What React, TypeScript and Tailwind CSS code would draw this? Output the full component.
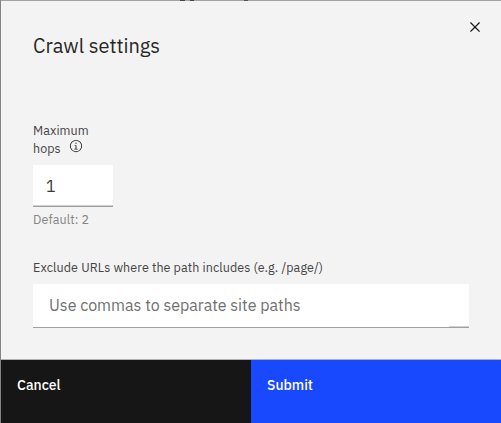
import React from "react";

function CloseIcon() {
  return (
    <svg width="20" height="20" viewBox="0 0 32 32" fill="#161616" aria-hidden="true">
      <path d="M24 9.4 22.6 8 16 14.6 9.4 8 8 9.4 14.6 16 8 22.6 9.4 24 16 17.4 22.6 24 24 22.6 17.4 16z" />
    </svg>
  );
}

function InfoIcon() {
  return (
    <svg width="14" height="14" viewBox="0 0 32 32" fill="#262626" aria-hidden="true">
      <path d="M17 22v-8h-4v2h2v6h-3v2h8v-2zM16 8a1.5 1.5 0 1 0 1.5 1.5A1.5 1.5 0 0 0 16 8z" />
      <path d="M16 30a14 14 0 1 1 14-14 14 14 0 0 1-14 14zm0-26a12 12 0 1 0 12 12A12 12 0 0 0 16 4z" />
    </svg>
  );
}

export default function App() {
  return (
    <div className="flex h-[423px] w-[501px] flex-col overflow-hidden border-l border-[#858585] bg-[#f3f3f3] font-['IBM_Plex_Sans',Roboto,sans-serif] text-[#262626]">
      <div className="flex h-px shrink-0 bg-[#a3a3a3] pl-[179px]">
        <span className="h-px w-[5px] bg-[#444]" />
        <span className="ml-[5px] h-px w-[4px] bg-[#444]" />
        <span className="ml-[50px] h-px w-[4px] bg-[#555]" />
      </div>
      <header className="flex h-[120px] shrink-0 justify-between pl-8 pr-4">
        <h1 className="pt-[31px] text-[20px] leading-7">Crawl settings</h1>
        <button aria-label="Close" className="mt-4 h-5 w-5">
          <CloseIcon />
        </button>
      </header>
      <main className="flex h-[238px] shrink-0 flex-col pl-8 pr-8">
        <label className="block h-11 w-20 text-[12.5px] leading-[18px] tracking-[0.08px] text-[#444444]">
          Maximum
          <span className="flex">
            hops
            <span className="ml-2 h-4">
              <InfoIcon />
            </span>
          </span>
        </label>
        <input
          defaultValue="1"
          className="h-[42px] w-20 rounded-none border-b border-[#a0a0a0] bg-white pl-[13px] pr-3 text-[16px] text-[#393939] shadow-[inset_0_-1px_0_#d0d0d0] outline-none"
        />
        <p className="mt-[3px] text-[12.5px] leading-[18px] tracking-[0.12px] text-[#858585]">Default: 2</p>
        <label className="mt-[30px] text-[12.5px] leading-[18px] tracking-[0.1px] text-[#444444]">
          Exclude URLs where the path includes (e.g. /page/)
        </label>
        <div className="mt-2 flex h-11 w-[436px] flex-col border-b border-[#a0a0a0] bg-white">
          <input
            placeholder="Use commas to separate site paths"
            className="h-[42px] w-full bg-transparent px-4 text-[16px] text-[#393939] outline-none placeholder:text-[#707070]"
          />
          <span className="h-px w-5 self-end bg-[#d0d0d0]" />
        </div>
      </main>
      <footer className="flex h-16 shrink-0 border-t border-[#b0b0b0] text-[14px] font-medium leading-[18px] text-white">
        <button className="flex w-[250px] items-start bg-[#161616] px-4 pt-4">Cancel</button>
        <button className="flex w-[250px] items-start bg-[#1949ff] px-4 pt-4">Submit</button>
      </footer>
    </div>
  );
}
